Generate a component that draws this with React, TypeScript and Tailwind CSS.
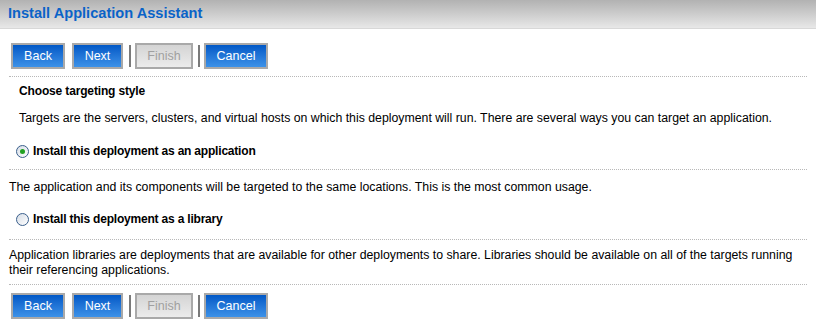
import React from 'react';

type Btn = { label: string; disabled?: boolean; w: string; ml: string };

const buttons: (Btn | { sep: true; ml: string })[] = [
  { label: 'Back', w: 'w-[54px]', ml: 'ml-[11px]' },
  { label: 'Next', w: 'w-[51px]', ml: 'ml-[7px]' },
  { sep: true, ml: 'ml-[6px]' },
  { label: 'Finish', disabled: true, w: 'w-[58px]', ml: 'ml-[4px]' },
  { sep: true, ml: 'ml-[5px]' },
  { label: 'Cancel', w: 'w-[64px]', ml: 'ml-[4px]' },
];

function ButtonBar() {
  return (
    <div className="flex items-center h-[26px]">
      {buttons.map((b, i) =>
        'sep' in b ? (
          <div key={i} className={`${b.ml} w-[2px] h-[22px] bg-[#7a7a7a]`} />
        ) : (
          <button
            key={i}
            className={`${b.ml} ${b.w} h-[26px] border-2 border-[#a9a9a9] text-[12.5px] leading-none flex items-center justify-center ${
              b.disabled
                ? 'bg-gradient-to-b from-[#d4d4d4] to-[#ececec] text-[#a0a0a0]'
                : 'bg-gradient-to-b from-[#0058c6] to-[#3d92e8] text-white'
            }`}
          >
            {b.label}
          </button>
        ),
      )}
    </div>
  );
}

function Dotted() {
  return <div className="mx-[9px] border-t border-dotted border-[#b8b8b8]" />;
}

function Radio({ checked }: { checked?: boolean }) {
  return (
    <span className="w-[13px] h-[13px] rounded-full border border-[#3a5f8c] bg-gradient-to-br from-[#d6dde6] to-white flex items-center justify-center shrink-0">
      {checked && <span className="w-[5px] h-[5px] rounded-full bg-[#21a121]" />}
    </span>
  );
}

export default function App() {
  return (
    <div
      className="w-[816px] h-[332px] bg-white text-[12.3px] text-black overflow-hidden"
      style={{ fontFamily: '"Liberation Sans", Arial, sans-serif' }}
    >
      <div className="h-[29px] bg-gradient-to-b from-[#b2b2b2] to-[#e8e8e8] border-b border-[#d8d8d8] flex items-center pl-[8px]">
        <h1 className="text-[14.6px] font-bold text-[#0a63c8]">Install Application Assistant</h1>
      </div>

      <div className="pt-[14px]">
        <ButtonBar />
      </div>
      <div className="pt-[7px]">
        <Dotted />
      </div>

      <div className="pl-[19px] pt-[7px]">
        <h2 className="font-bold leading-[14px] text-[12px] tracking-[-0.15px]">Choose targeting style</h2>
        <p className="mt-[13px] leading-[14px]">
          Targets are the servers, clusters, and virtual hosts on which this deployment will run. There are several ways you can target an application.
        </p>
      </div>

      <label className="flex items-center gap-[4px] pl-[16px] mt-[19px] h-[14px] font-bold text-[12px] tracking-[-0.2px]">
        <Radio checked />
        Install this deployment as an application
      </label>
      <div className="pt-[11px]">
        <Dotted />
      </div>
      <p className="pl-[9px] pt-[10px] leading-[14px]">
        The application and its components will be targeted to the same locations. This is the most common usage.
      </p>

      <label className="flex items-center gap-[4px] pl-[16px] mt-[18px] h-[14px] font-bold text-[12px] tracking-[-0.2px]">
        <Radio />
        Install this deployment as a library
      </label>
      <div className="pt-[13px]">
        <Dotted />
      </div>
      <p className="px-[9px] pt-[8px] leading-[15px] w-[810px]">
        Application libraries are deployments that are available for other deployments to share. Libraries should be available on all of the targets running their referencing applications.
      </p>
      <div className="pt-[6px]">
        <Dotted />
      </div>
      <div className="pt-[8px]">
        <ButtonBar />
      </div>
    </div>
  );
}
